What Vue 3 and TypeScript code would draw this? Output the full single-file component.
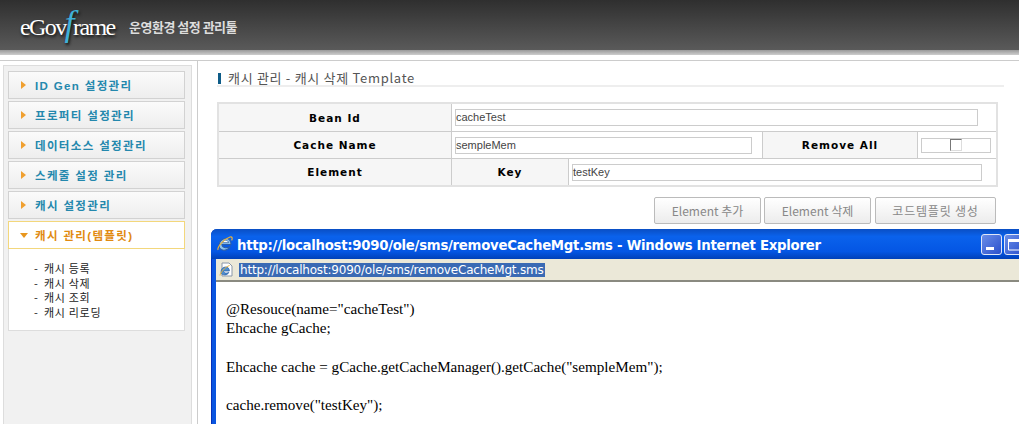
<script setup lang="ts">
interface MenuItem { label: string; active?: boolean }
const menu: MenuItem[] = [
  { label: 'ID Gen 설정관리' },
  { label: '프로퍼티 설정관리' },
  { label: '데이터소스 설정관리' },
  { label: '스케줄 설정 관리' },
  { label: '캐시 설정관리' },
  { label: '캐시 관리(템플릿)', active: true },
]
const subs: string[] = ['캐시 등록', '캐시 삭제', '캐시 조회', '캐시 리로딩']
const buttons: string[] = ['Element 추가', 'Element 삭제', '코드템플릿 생성']
const code: string[] = [
  '@Resouce(name="cacheTest")',
  'Ehcache gCache;',
  '',
  'Ehcache cache = gCache.getCacheManager().getCache("sempleMem");',
  '',
  'cache.remove("testKey");',
]
</script>

<template>
  <div class="page">
    <header class="top">
      <div class="logo"><span>eGov</span><span class="f">f</span><span>rame</span></div>
      <div class="tool">운영환경 설정 관리툴</div>
    </header>
    <div class="band"></div>
    <div class="body">
      <aside class="side">
        <template v-for="m in menu" :key="m.label">
          <div class="item" :class="{ active: m.active }">
            <svg v-if="!m.active" class="arr" width="5" height="8" viewBox="0 0 5 8"><path d="M0 0L5 4L0 8Z" fill="#f0a030" /></svg>
            <svg v-else class="arr down" width="8" height="5" viewBox="0 0 8 5"><path d="M0 0H8L4 5Z" fill="#e8961e" /></svg>
            <span>{{ m.label }}</span>
          </div>
        </template>
        <ul class="sub">
          <li v-for="s in subs" :key="s"><span class="dash">-</span>{{ s }}</li>
        </ul>
      </aside>
      <main class="main">
        <h1 class="title"><i></i>캐시 관리 - 캐시 삭제 Template</h1>
        <div class="table">
          <div class="row r1">
            <div class="th c1">Bean Id</div>
            <div class="td grow"><div class="inp w1">cacheTest</div></div>
          </div>
          <div class="row r2">
            <div class="th c1">Cache Name</div>
            <div class="td c2"><div class="inp w2">sempleMem</div></div>
            <div class="th c3">Remove All</div>
            <div class="td grow"><div class="chk"><b></b></div></div>
          </div>
          <div class="row r3">
            <div class="th c1">Element</div>
            <div class="th c4">Key</div>
            <div class="td grow"><div class="inp w3">testKey</div></div>
          </div>
        </div>
        <div class="btns">
          <button v-for="b in buttons" :key="b" class="btn">{{ b }}</button>
        </div>
      </main>
    </div>

    <section class="win">
      <div class="bar">
        <svg class="ie" width="18" height="18" viewBox="0 0 18 18">
          <path d="M3 10.5C3 6.5 6 3.5 10 3.5C13 3.5 15 5.5 15 9.5H6C6 12.5 10 13.8 14 11.5C12.5 15 8 16 5.3 14.5C3.8 13.6 3 12 3 10.5Z" fill="#8fc4ee" stroke="#2b5ea8" stroke-width="1.1" />
          <path d="M6.2 7.7C6.8 6 8 5.2 9.6 5.2C11 5.2 12.2 6 12.5 7.7Z" fill="#fff" stroke="#2b5ea8" stroke-width=".8" />
          <path d="M2 15C1 12 8 4 14 2C16.5 1.4 16.6 3.5 15.6 5.4" fill="none" stroke="#e8b23c" stroke-width="1.2" />
        </svg>
        <span class="wtitle">http://localhost:9090/ole/sms/removeCacheMgt.sms - Windows Internet Explorer</span>
        <div class="wbtn"><svg width="21" height="21" viewBox="0 0 21 21"><rect x="5" y="13" width="8" height="3" fill="#fff" /></svg></div>
        <div class="wbtn"><svg width="21" height="21" viewBox="0 0 21 21"><path d="M4.5 5.5H17V16H4.5Z" fill="none" stroke="#fff" /><rect x="4" y="5" width="13" height="3" fill="#fff" /></svg></div>
      </div>
      <div class="addr">
        <svg width="15" height="15" viewBox="0 0 15 15">
          <path d="M3 1H10L13 4V14H3Z" fill="#fff" stroke="#8a97a8" />
          <path d="M2 10C2 7 4 5 6.6 5C9 5 10.4 6.6 10.4 9H4.4C4.6 11 7 11.8 9.8 10.4C8.8 12.8 6 13.4 4 12.6C2.8 12.2 2 11.2 2 10Z" fill="#4d8fd0" stroke="#2b5ea8" stroke-width=".7" />
          <path d="M1 13.5C1 11 6 5 10.5 3.5" fill="none" stroke="#e8b23c" />
        </svg>
        <span class="url">http://localhost:9090/ole/sms/removeCacheMgt.sms</span>
      </div>
      <div class="doc">
        <div v-for="(c, i) in code" :key="i" class="line">{{ c }}</div>
      </div>
    </section>
  </div>
</template>

<style>
html, body { margin: 0; background: #fff; overflow: hidden; }
</style>

<style scoped>
.page { position: relative; width: 1019px; height: 424px; overflow: hidden; font-family: "Liberation Sans", "Noto Sans CJK KR", sans-serif; background: #fff; }
.top { height: 50px; box-sizing: border-box; padding-left: 20px; display: flex; align-items: center; background: linear-gradient(#2f2f2f, #5a5a5a); }
.logo { width: 95px; flex: none; font: 24px/1 "Liberation Serif", serif; color: #fff; letter-spacing: -1.6px; display: flex; align-items: baseline; margin-top: -4px; text-shadow: 1px 2px 3px #111; }
.logo .f { color: #3fb0d8; font-style: italic; font-size: 36px; margin: 0 0 0 -1px; }
.tool { margin-left: 14px; margin-top: 2px; color: #ddd; font: 700 13px "Noto Sans CJK KR", sans-serif; letter-spacing: -.5px; }
.band { height: 11px; box-sizing: border-box; background: linear-gradient(#999, #c8c8c8 45%, #fff 46%); border-bottom: 1px solid #ccc; }
.body { display: flex; height: 363px; }
.side { width: 189px; margin: 4px 0 0 3px; box-sizing: border-box; padding: 5px 6px 0 4px; background: #f1f1f1; border: 1px solid #ddd; border-bottom: 0; display: flex; flex-direction: column; }
.item { height: 28px; box-sizing: border-box; margin-bottom: 2px; padding-left: 12px; display: flex; align-items: center; gap: 9px; background: linear-gradient(#fbfbfb, #eee); border: 1px solid #d2d2d2; color: #2488ad; font: 700 11.5px "Liberation Sans", "Noto Sans CJK KR", sans-serif; letter-spacing: 1.35px; }
.item.active { background: #fff; border-color: #f3d77c; color: #e18a10; margin-bottom: 0; }
.arr.down { margin-left: -1px; margin-right: -2px; }
.sub { margin: 0; padding: 12px 0 11px 25px; list-style: none; background: #fff; border: 1px solid #ddd; border-top: 0; font: 11px/14.6px "Noto Sans CJK KR", sans-serif; letter-spacing: .7px; color: #222; }
.dash { display: inline-block; width: 10px; }
.main { flex: 1; margin-left: 5px; border-left: 1px solid #ccc; padding: 0 0 0 19px; min-width: 0; }
.title { margin: 10px 15px 0 0; height: 14px; padding-left: 1px; border-bottom: 2px solid #eee; font: 400 13px/14px "Noto Sans CJK KR", sans-serif; letter-spacing: .7px; color: #555; display: flex; align-items: center; gap: 7px; }
.title i { width: 3px; height: 11px; background: #0e5c88; }
.table { margin-top: 15px; width: 781px; box-sizing: border-box; border: 2px solid #e2e2e2; }
.row { display: flex; height: 27px; border-bottom: 1px solid #ccc; box-sizing: border-box; }
.r1 { height: 28px; }
.r3 { border-bottom: 0; height: 26px; }
.th { background: #f6f6f6; display: flex; align-items: center; justify-content: center; font: 700 10.5px "DejaVu Sans", sans-serif; letter-spacing: 1px; color: #000; box-sizing: border-box; border-right: 1px solid #ccc; height: 100%; }
.c1 { width: 233px; flex: none; }
.c2 { width: 310px; flex: none; }
.c3 { width: 156px; flex: none; border-left: 1px solid #ccc; }
.c4 { width: 117px; flex: none; }
.td { display: flex; align-items: center; padding-left: 3px; box-sizing: border-box; }
.grow { flex: 1; }
.inp { height: 17px; box-sizing: border-box; border: 1px solid #ccc; font: 11px/15px "Liberation Sans", sans-serif; color: #444; padding-left: 0; }
.w1 { width: 523px; }
.w2 { width: 297px; }
.w3 { width: 410px; }
.chk { width: 70px; height: 15px; box-sizing: border-box; border: 1px solid #ccc; display: flex; justify-content: center; align-items: flex-start; }
.chk b { width: 12px; height: 12px; box-sizing: border-box; border: 1px solid; border-color: #777 #ddd #ddd #777; background: #fff; }
.btns { display: flex; justify-content: flex-end; gap: 3px; width: 779px; margin-top: 10px; }
.btn { width: 107px; height: 27px; padding: 0; box-sizing: border-box; border: 1px solid #bbb; border-radius: 2px; background: linear-gradient(#fff, #ececec); color: #888; font: 12px "Noto Sans CJK KR", sans-serif; }
.btn:last-child { width: 121px; margin-left: 1px; letter-spacing: .8px; }
.win { position: absolute; left: 211px; top: 229px; width: 830px; height: 200px; background: #0a55e0; border-radius: 6px 6px 0 0; padding: 0 0 0 4px; box-sizing: border-box; border-left: 1px solid #0831b8; }
.bar { height: 30px; margin-left: -5px; padding: 0 0 0 5px; border-radius: 6px 6px 0 0; display: flex; align-items: center; background: linear-gradient(#0a4fc4, #0a62ec 25%, #0456e4 75%, #0040b8); }
.ie { flex: none; }
.wtitle { margin-left: 3px; width: 744px; margin-top: 2px; flex: none; color: #fff; font: 700 13.3px "DejaVu Sans", sans-serif; letter-spacing: -.28px; white-space: nowrap; overflow: hidden; }
.wbtn { flex: none; width: 21px; height: 21px; margin-right: 2px; box-sizing: border-box; border: 1px solid #dfe7f8; border-radius: 3px; background: linear-gradient(135deg, #6a8ee8, #2a50cc); }
.wbtn svg { display: block; margin: -1px; }
.addr { height: 23px; box-sizing: border-box; background: #ebe8d8; border-bottom: 2px solid #8a8a80; display: flex; align-items: center; padding-left: 3px; gap: 5px; }
.url { background: #3a6ab4; color: #fff; font: 12px/14px "DejaVu Sans", sans-serif; letter-spacing: -.2px; padding: 0 1px; }
.doc { background: #fff; height: 150px; padding: 17px 0 0 10px; font: 15.15px/19.2px "Liberation Serif", serif; color: #000; }
.line { min-height: 19.2px; }
</style>
